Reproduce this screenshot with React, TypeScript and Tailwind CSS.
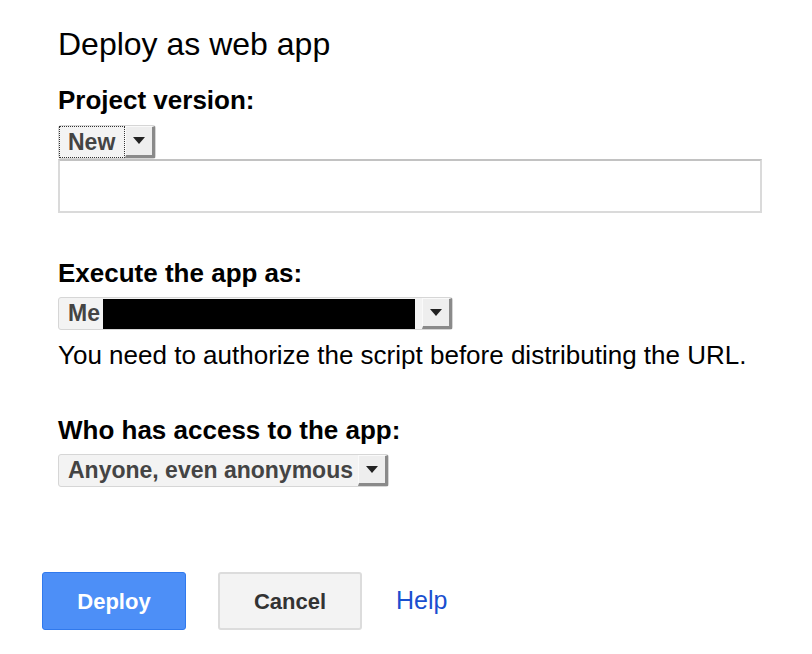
import React from 'react';

function Arrow() {
  return (
    <div className="flex h-full w-[30px] items-center justify-center border-t border-l border-t-[#fafafa] border-l-[#fafafa] border-r-[3px] border-b-[3px] border-r-[#8a8a8a] border-b-[#8a8a8a] bg-[#eeeeee]">
      <svg width="12" height="8" viewBox="0 0 12 8">
        <path d="M0 0 L12 0 L6 7 Z" fill="#222" />
      </svg>
    </div>
  );
}

function Select({ children, width, height, focused }: { children: React.ReactNode; width: string; height: string; focused?: boolean }) {
  return (
    <div className={`flex items-stretch rounded-[3px] border border-[#d6d6d6] bg-[#f3f3f3] ${width} ${height}`}>
      <div className={`flex flex-1 items-center pl-[9px] text-[23px] font-bold leading-none text-[#444] ${focused ? 'outline outline-1 outline-dotted outline-[#333] -outline-offset-1' : ''}`}>
        {children}
      </div>
      <Arrow />
    </div>
  );
}

export default function App() {
  const font = { fontFamily: '"Liberation Sans", Arial, sans-serif' };
  return (
    <div className="h-[654px] w-[812px] bg-white text-black" style={font}>
      <div className="flex flex-col pl-[58px] pt-[26px]">
        <h1 className="text-[32px] leading-[36px] font-normal">Deploy as web app</h1>

        <h2 className="mt-[23px] text-[26px] font-bold leading-[30px]">Project version:</h2>
        <div className="mt-[10px]">
          <Select width="w-[98px]" height="h-[34px]" focused>New</Select>
        </div>
        <div className="h-[54px] w-[704px] border-2 border-[#dadada] border-t-[#c2c2c2]" />

        <h2 className="mt-[45px] text-[26px] font-bold leading-[30px]">Execute the app as:</h2>
        <div className="mt-[9px]">
          <Select width="w-[395px]" height="h-[33px]">
            <span>Me</span>
            <span className="ml-[3px] h-[30px] w-[312px] bg-black" />
          </Select>
        </div>
        <p className="mt-[10px] text-[26px] leading-[30px]">You need to authorize the script before distributing the URL.</p>

        <h2 className="mt-[45px] text-[26px] font-bold leading-[30px]">Who has access to the app:</h2>
        <div className="mt-[9px]">
          <Select width="w-[331px]" height="h-[33px]">Anyone, even anonymous</Select>
        </div>
      </div>

      <div className="mt-[85px] flex items-center pl-[42px]">
        <button className="h-[58px] w-[144px] rounded-[3px] border border-[#3079ed] bg-[#4d8ff7] text-[22px] font-bold text-white">
          Deploy
        </button>
        <button className="ml-[32px] h-[58px] w-[144px] rounded-[3px] border-2 border-[#dcdcdc] bg-[#f3f3f3] text-[22px] font-bold text-[#333]">
          Cancel
        </button>
        <a className="ml-[34px] text-[25px] text-[#1a4fcf]" href="#">Help</a>
      </div>
    </div>
  );
}
